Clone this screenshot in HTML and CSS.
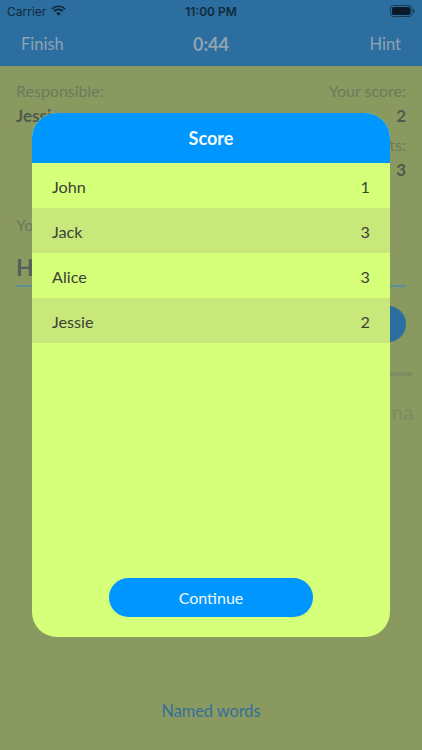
FILE: index.html
```html
<!DOCTYPE html>
<html lang="en">
<head>
<meta charset="utf-8">
<title>Score</title>
<link rel="stylesheet" href="styles.css">
</head>
<body>
<div class="screen">
  <header class="header">
    <div class="status">
      <div class="status-left">
        <span>Carrier</span>
        <svg class="wifi" viewBox="0 0 16 12"><path d="M8 11.6 5.6 9.1a3.4 3.4 0 0 1 4.8 0z"/><path d="M3.900 7.400a5.800 5.800 0 0 1 8.200 0l1.300-1.400a7.700 7.700 0 0 0-10.800 0z"/><path d="M1.500 5a9.200 9.200 0 0 1 13 0l1.300-1.300a11 11 0 0 0-15.600 0z"/></svg>
      </div>
      <span class="clock">11:00 PM</span>
      <div class="status-right">
        <svg class="battery" viewBox="0 0 25 12"><rect x=".5" y=".5" width="21.500" height="11" rx="3" fill="none" stroke="#1a3a52"/><rect x="2" y="2" width="18.500" height="8" rx="1.800"/><rect x="23" y="4" width="1.500" height="4" rx=".7" fill="#1a3a52"/></svg>
      </div>
    </div>
    <nav class="nav">
      <span>Finish</span>
      <span class="timer">0:44</span>
      <span>Hint</span>
    </nav>
  </header>
  <main class="game">
    <div class="game-row">
      <span>Responsible:</span>
      <span>Your score:</span>
    </div>
    <div class="game-row strong">
      <span>Jessie</span>
      <span>2</span>
    </div>
    <div class="game-row second">
      <span></span>
      <span>Your points:</span>
    </div>
    <div class="game-row strong">
      <span></span>
      <span>3</span>
    </div>
    <p class="your">Your word:</p>
    <div class="word">Hello</div>
    <div class="send-row"><span class="send"></span></div>
    <div class="bar"></div>
    <div class="hint-word">ma</div>
    <div class="named">Named words</div>
  </main>
  <section class="modal">
    <h2 class="modal-title">Score</h2>
    <ul class="list">
      <li class="item"><span>John</span><span>1</span></li>
      <li class="item alt"><span>Jack</span><span>3</span></li>
      <li class="item"><span>Alice</span><span>3</span></li>
      <li class="item alt"><span>Jessie</span><span>2</span></li>
    </ul>
    <button class="continue" type="button">Continue</button>
  </section>
</div>
</body>
</html>
```
FILE: styles.css
```css
* { box-sizing: border-box; }
html, body { margin: 0; padding: 0; }
body { font-family: "Lato", "Open Sans", sans-serif; }
.screen {
  position: relative;
  width: 422px;
  height: 750px;
  overflow: hidden;
  background: #8a9960;
  display: flex;
  flex-direction: column;
}
.header { height: 66px; background: #2b6e9f; flex: none; }
.status {
  height: 21px;
  padding: 1px 7px 0 7px;
  display: flex;
  align-items: center;
  justify-content: space-between;
  position: relative;
  font-family: "Inter", "Liberation Sans", sans-serif;
  font-size: 12px;
  color: #12293c;
}
.status-left { display: flex; align-items: center; gap: 5px; }
.wifi { width: 15px; height: 11px; fill: #0e2233; margin-top: -1px; }
.clock { position: absolute; left: 0; right: 0; text-align: center; font-weight: 600; }
.status-right { display: flex; }
.battery { width: 25px; height: 12px; fill: #0a1a28; }
.nav {
  height: 45px;
  padding: 0 21px;
  display: flex;
  align-items: center;
  justify-content: space-between;
  position: relative;
  font-size: 16.500px;
  color: #8fa3b3;
}
.timer {
  position: absolute;
  left: 0;
  right: 0;
  text-align: center;
  font-size: 18px;
  font-weight: 700;
}
.game {
  flex: 1;
  padding: 15px 16px 0;
  display: flex;
  flex-direction: column;
  font-size: 16px;
  color: #6d7a5c;
}
.game-row { display: flex; justify-content: space-between; height: 20px; line-height: 20px; }
.strong { color: #4f5a4f; font-size: 17px; font-weight: 700; margin-top: 5px; }
.second { margin-top: 9px; }
.your { margin: 35px 0 0; height: 20px; line-height: 20px; }
.word {
  margin-top: 12px;
  height: 40px;
  line-height: 40px;
  font-size: 23px;
  font-weight: 700;
  color: #55605a;
  border-bottom: 2px solid #5e8f94;
}
.send-row { display: flex; justify-content: flex-end; margin-top: 19px; }
.send { width: 90px; height: 36px; border-radius: 18px; background: #2b6e9f; }
.bar { height: 4px; margin: 30px -6px 0 100px; background: #7f8c62; }
.hint-word { margin: 22px -8px 0 0; text-align: right; font-size: 22px; color: #7f8c62; }
.named {
  margin-top: auto;
  margin-bottom: 30px;
  text-align: center;
  font-size: 16.300px;
  color: #33709a;
}
.modal {
  position: absolute;
  left: 32px;
  top: 113px;
  width: 358px;
  height: 524px;
  border-radius: 25px;
  overflow: hidden;
  background: #d6ff7a;
  display: flex;
  flex-direction: column;
}
.modal-title {
  margin: 0;
  height: 50px;
  line-height: 50px;
  text-align: center;
  font-size: 18px;
  font-weight: 700;
  color: #f4fbf4;
  background: #0096ff;
}
.list { list-style: none; margin: 0; padding: 0; }
.item {
  height: 45px;
  padding: 2px 20px 0;
  display: flex;
  align-items: center;
  justify-content: space-between;
  font-size: 16.200px;
  color: #3a4235;
}
.alt { background: #c9e87c; }
.continue {
  margin: auto auto 20px;
  width: 204px;
  height: 39px;
  border: 0;
  border-radius: 20px;
  background: #0096ff;
  color: #eef8f0;
  font: 16px "Lato", sans-serif;
}
```
